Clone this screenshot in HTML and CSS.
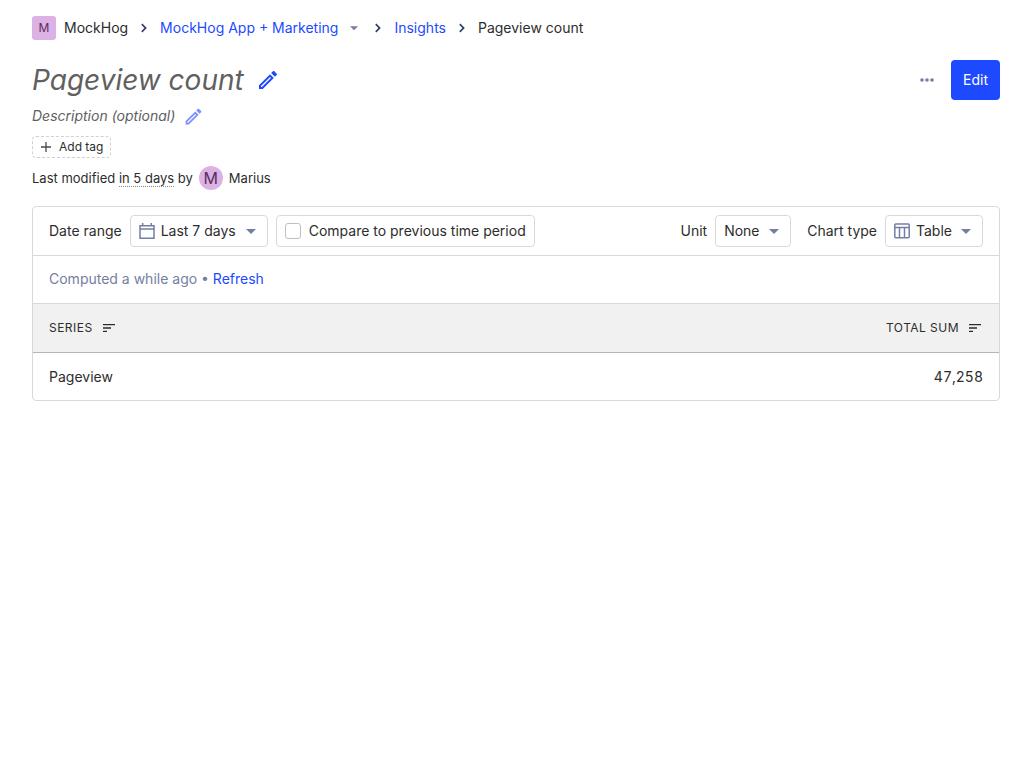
FILE: index.html
```html
<!DOCTYPE html>
<html lang="en">
<head>
<meta charset="utf-8">
<title>Pageview count • MockHog</title>
<link rel="stylesheet" href="styles.css">
</head>
<body>
<svg class="sprite" aria-hidden="true">
  <symbol id="chevron" viewBox="0 0 24 24"><path d="M7.800 16.800L12.600 12 7.800 7.200 9.600 5.400 16.200 12l-6.600 6.600z"/></symbol>
  <symbol id="caret" viewBox="0 0 24 24"><path d="M6 9.500l6 6 6-6z"/></symbol>
  <symbol id="pencil" viewBox="0 0 24 24"><path d="M14.06 9.02l.92.92L5.92 19H5v-.92l9.06-9.06M17.66 3c-.25 0-.51.1-.7.29l-1.83 1.83 3.75 3.75 1.83-1.83c.39-.39.39-1.02 0-1.41l-2.34-2.34c-.2-.2-.45-.29-.71-.29zm-3.6 3.19L3 17.25V21h3.75L17.81 9.94l-3.75-3.75z"/></symbol>
  <symbol id="sort" viewBox="0 0 24 24"><path d="M3 18h6v-2H3v2zM3 6v2h18V6H3zm0 7h12v-2H3v2z"/></symbol>
</svg>
<main class="page">
  <nav class="crumbs" aria-label="Breadcrumb">
    <span class="crumb"><span class="avatar avatar-square">M</span>MockHog</span>
    <svg class="separator"><use href="#chevron"/></svg>
    <a class="link" href="#project">MockHog App + Marketing</a>
    <button class="icon-button project-menu" type="button" aria-label="Switch project"><svg class="icon-small"><use href="#caret"/></svg></button>
    <svg class="separator"><use href="#chevron"/></svg>
    <a class="link" href="#insights">Insights</a>
    <svg class="separator"><use href="#chevron"/></svg>
    <span>Pageview count</span>
  </nav>

  <header class="heading">
    <h1 class="title">Pageview count</h1>
    <button class="icon-button edit-title" type="button" aria-label="Edit name"><svg class="icon-large"><use href="#pencil"/></svg></button>
    <div class="actions">
      <button class="icon-button more" type="button" aria-label="More"><svg class="icon-large" viewBox="0 0 24 24"><circle cx="7" cy="12" r="1.8"/><circle cx="12" cy="12" r="1.8"/><circle cx="17" cy="12" r="1.8"/></svg></button>
      <button class="primary" type="button">Edit</button>
    </div>
  </header>

  <div class="description">
    <span>Description (optional)</span>
    <button class="icon-button edit-description" type="button" aria-label="Edit description"><svg class="icon-medium"><use href="#pencil"/></svg></button>
  </div>
  <button class="add-tag" type="button"><svg class="plus" viewBox="0 0 12 12"><path d="M6 1v10M1 6h10"/></svg>Add tag</button>
  <div class="modified">
    <span>Last modified <span class="when">in 5 days</span> by</span>
    <span class="avatar avatar-round">M</span>
    <span>Marius</span>
  </div>

  <section class="card">
    <div class="filters">
      <div class="filter-group">
        <label for="range">Date range</label>
        <span class="dropdown with-icon">
          <svg class="lead" viewBox="0 0 18 18"><path class="stroke" d="M2 3.7h14v12.6H2zM2 7h14M4.7 1v2.500M13.300 1v2.500"/></svg>
          <select id="range"><option>Last 7 days</option></select>
          <svg class="caret"><use href="#caret"/></svg>
        </span>
        <label class="compare"><input type="checkbox">Compare to previous time period</label>
      </div>
      <div class="filter-group">
        <label for="unit">Unit</label>
        <span class="dropdown">
          <select id="unit"><option>None</option></select>
          <svg class="caret"><use href="#caret"/></svg>
        </span>
        <label class="chart-label" for="chart">Chart type</label>
        <span class="dropdown with-icon">
          <svg class="lead" viewBox="0 0 18 18"><rect class="stroke" x="1.800" y="2" width="14.400" height="13.800" rx="1"/><path class="stroke" d="M2 5.500h14M6.500 5.500v10M11.500 5.500v10"/></svg>
          <select id="chart"><option>Table</option></select>
          <svg class="caret"><use href="#caret"/></svg>
        </span>
      </div>
    </div>
    <div class="computed">Computed a while ago • <a class="link" href="#refresh">Refresh</a></div>
    <table class="results">
      <thead>
        <tr>
          <th scope="col"><button class="sorter" type="button">Series<svg class="icon-small"><use href="#sort"/></svg></button></th>
          <th scope="col" class="number"><button class="sorter" type="button">Total sum<svg class="icon-small"><use href="#sort"/></svg></button></th>
        </tr>
      </thead>
      <tbody>
        <tr><td>Pageview</td><td class="number">47,258</td></tr>
      </tbody>
    </table>
  </section>
</main>
</body>
</html>
```

FILE: styles.css
```css
* { box-sizing: border-box; }
body {
  margin: 0;
  background: #fff;
  color: #2d2d2d;
  font: 14px/20px Inter, "Liberation Sans", sans-serif;
}
button, select, input { font: inherit; color: inherit; margin: 0; }
button { cursor: pointer; }
svg { display: block; flex: none; fill: currentColor; }
.sprite { position: absolute; width: 0; height: 0; }
.page { display: flex; flex-direction: column; padding: 16px 32px; }
.link { color: #1d4aff; text-decoration: none; }
.icon-button {
  display: flex;
  align-items: center;
  justify-content: center;
  padding: 0;
  border: 0;
  background: none;
}
.icon-small { width: 16px; height: 16px; }
.icon-medium { width: 21px; height: 21px; }
.icon-large { width: 24px; height: 24px; }

.crumbs { display: flex; align-items: center; height: 24px; gap: 8px; }
.crumb { display: flex; align-items: center; gap: 8px; }
.separator { width: 16px; height: 16px; color: #35416b; }
.project-menu { width: 16px; color: #747ea2; }
.avatar {
  display: flex;
  align-items: center;
  justify-content: center;
  width: 24px;
  height: 24px;
  background: #dcb1e3;
  color: #572e5e;
}
.avatar-square { border-radius: 3px; font-size: 12px; }
.avatar-round { border-radius: 50%; font-size: 16px; }

.heading { display: flex; align-items: center; margin-top: 20px; min-height: 40px; }
.title { margin: 0; font-size: 28px; line-height: 40px; font-weight: 400; font-style: italic; color: #606060; }
.edit-title { margin-left: 12px; color: #1d4aff; }
.actions { display: flex; align-items: center; gap: 12px; margin-left: auto; }
.more { color: #747ea2; }
.primary { height: 40px; padding: 0 12px; border: 0; border-radius: 4px; background: #1d4aff; color: #fff; }

.description { display: flex; align-items: center; gap: 8px; height: 24px; margin-top: 4px; font-style: italic; color: #606060; }
.edit-description { color: #1d4aff; opacity: 0.6; }
.add-tag {
  display: flex;
  align-items: center;
  align-self: flex-start;
  gap: 7px;
  height: 22px;
  margin-top: 8px;
  padding: 0 7px;
  border: 1px dashed #d0d0d0;
  border-radius: 4px;
  background: none;
  font-size: 12px;
}
.plus { width: 12px; height: 12px; stroke: #4a4a4a; stroke-width: 1.3; }
.modified { display: flex; align-items: center; gap: 6px; height: 24px; margin-top: 8px; font-size: 13px; }
.when { border-bottom: 1px dotted #888; }

.card { margin-top: 16px; border: 1px solid #d9d9d9; border-radius: 4px; overflow: hidden; }
.filters { display: flex; align-items: center; justify-content: space-between; padding: 8px 16px; border-bottom: 1px solid #d9d9d9; }
.filter-group { display: flex; align-items: center; gap: 8px; }
.chart-label { margin-left: 8px; }
.dropdown { position: relative; display: flex; }
.dropdown select {
  appearance: none;
  height: 32px;
  padding: 0 30px 0 8px;
  border: 1px solid #d9d9d9;
  border-radius: 4px;
  background: #fff;
}
.with-icon select { padding-left: 30px; }
.lead, .caret { position: absolute; color: #747ea2; pointer-events: none; }
.lead { left: 8px; top: 7px; width: 18px; height: 18px; }
.stroke { fill: none; stroke: currentColor; stroke-width: 1.5; }
.caret { right: 7px; top: 6px; width: 20px; height: 20px; }
.compare {
  display: flex;
  align-items: center;
  gap: 8px;
  height: 32px;
  padding: 0 8px;
  border: 1px solid #d9d9d9;
  border-radius: 4px;
}
.compare input { appearance: none; width: 16px; height: 16px; border: 1px solid #bfbfbf; border-radius: 3px; background: #fff; }
.computed { padding: 13px 16px 14px; border-bottom: 1px solid #d9d9d9; color: #747ea2; }

.results { width: 100%; border-collapse: separate; border-spacing: 0; font-variant-numeric: tabular-nums; }
.results th, .results td { height: 47px; padding: 0 16px; text-align: left; font-weight: 400; }
.results th { height: 49px; padding-bottom: 1px; background: #f1f1f1; border-bottom: 1px solid #b5b5b5; }
.results .number { text-align: right; }
.sorter {
  display: inline-flex;
  align-items: center;
  gap: 8px;
  padding: 0;
  border: 0;
  background: none;
  font-size: 12px;
  letter-spacing: 0.04em;
  text-transform: uppercase;
  vertical-align: middle;
}
```
